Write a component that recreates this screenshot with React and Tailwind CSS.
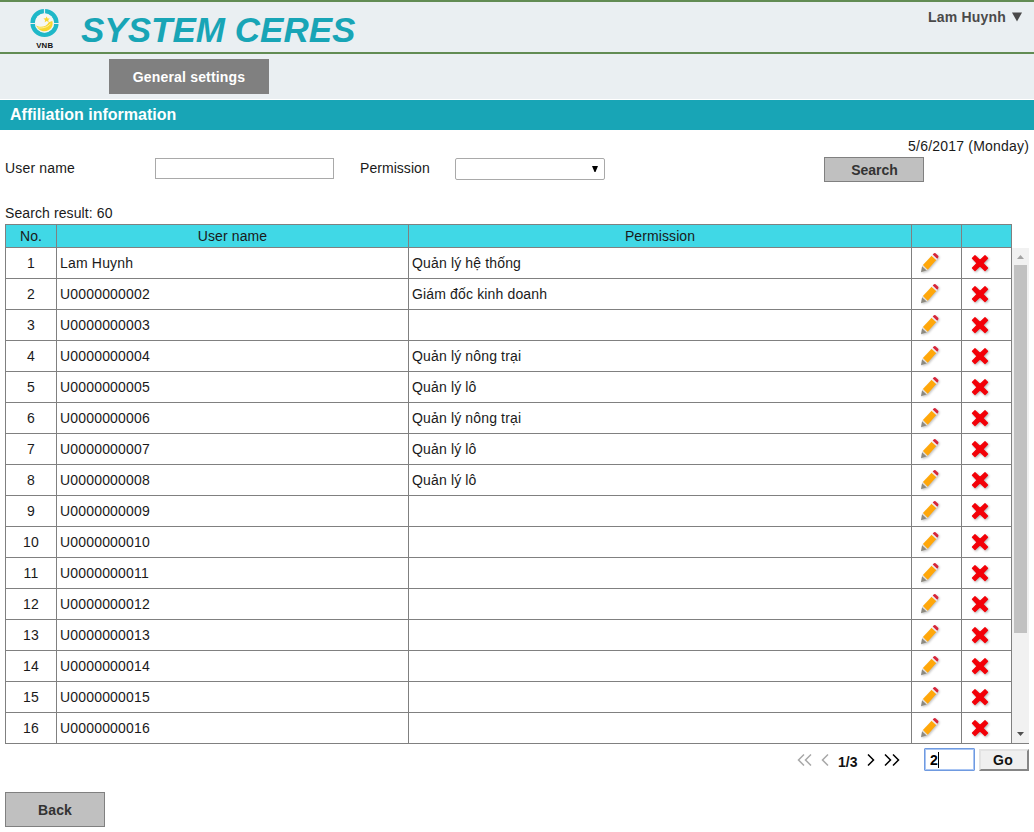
import React from "react";

const permissions = {
  1: "Quản lý hệ thống",
  2: "Giám đốc kinh doanh",
  4: "Quản lý nông trại",
  5: "Quản lý lô",
  6: "Quản lý nông trại",
  7: "Quản lý lô",
  8: "Quản lý lô",
};

const rows = Array.from({ length: 16 }, (_, i) => ({
  no: i + 1,
  name: i === 0 ? "Lam Huynh" : "U" + String(i + 1).padStart(10, "0"),
  permission: permissions[i + 1] || "",
}));

function Logo() {
  return (
    <svg width="32" height="44" viewBox="0 0 32 44" className="block">
      <circle cx="15.5" cy="16" r="11.9" fill="none" stroke="#1fb8c8" strokeWidth="4.4" />
      <circle cx="15.5" cy="16" r="9.4" fill="#f4f7f4" />
      <path d="M15.5 1v6.500M0 16.500h6.500M24.500 16.500h7" stroke="#eaeff2" strokeWidth="1.2" />
      <path d="M7.200 18.200c3 2.600 10.500 2 12.500-3l3.600-1.200c1.500 5-2 10.200-7.800 10.200-4 0-7.300-2.400-8.300-6z" fill="#f8d72f" />
      <path d="M8 20.700c5 1 11-.5 13.500-4" fill="none" stroke="#fff6b8" strokeWidth=".8" />
      <path d="M17.600 9.400l1 2 2.200.1-1.600 1.500.6 2.200-2.100-1.100-2 1.200.4-2.300-1.700-1.500 2.300-.2z" fill="#f8d72f" />
      <text x="15.700" y="40.900" textAnchor="middle" fontFamily="Liberation Sans, Arial, sans-serif" fontSize="7.800" fontWeight="700" fill="#111">VNB</text>
    </svg>
  );
}

function Pencil() {
  return (
    <svg width="20" height="22" viewBox="0 0 20 22" className="block drop-shadow-[1px_1px_1px_rgba(0,0,0,0.25)]">
      <path d="M1 20.300l1.100-6.300 5 4.300z" fill="#8d8a80" />
      <path d="M2.100 14.300l.8-1.400 5.100 4.700-1.300 1z" fill="#e4e1dc" />
      <path d="M2.900 13L11.600 3.800l4.700 4.200-8.600 9.800z" fill="#ffa70a" />
      <path d="M11.600 3.800l1.100-1.200 4.700 4.200-1.100 1.200z" fill="#f3eeee" />
      <path d="M12.700 2.600L14 1.200q.8-.5 1.500.1l2.700 2.500q.6.800 0 1.600l-1 1.400z" fill="#d7263a" />
    </svg>
  );
}

function Cross() {
  return (
    <svg width="18" height="18" viewBox="0 0 18 18" className="block drop-shadow-[1px_1px_1px_rgba(0,0,0,0.3)]">
      <path
        d="M4 1.800L9 6.500 14 1.800 16.500 4.300 11.800 9.200 16.500 14 14 16.500 9 11.800 4 16.500 1.500 14 6.200 9.200 1.500 4.300z"
        fill="#f30008"
        stroke="#f30008"
        strokeWidth="1.300"
        strokeLinejoin="round"
      />
    </svg>
  );
}

function Chevrons({ points, width, color }) {
  return (
    <svg width={width} height="12" viewBox={`0 0 ${width} 12`} className="block">
      {points.map((p) => (
        <polyline key={p} points={p} fill="none" stroke={color} strokeWidth="1.500" />
      ))}
    </svg>
  );
}

const grid = "grid grid-cols-[51px_352px_503px_50px_50px]";
const cell = "flex items-center border-r border-b border-[#808080]";

export default function App() {
  return (
    <div className="h-[832px] w-[1034px] overflow-hidden bg-white font-['Liberation_Sans',Arial,sans-serif] text-[14px] leading-4 tracking-[0.18px] text-[#1a1a1a]">
      <header className="flex h-[54px] items-start justify-between border-y-2 border-[#628c54] bg-[#eaeff2]">
        <div className="flex">
          <div className="ml-[29px] pt-[5px]">
            <Logo />
          </div>
          <h1 className="ml-5 pt-[8px] text-[35px] leading-10 font-bold tracking-[0.02px] whitespace-nowrap text-[#18a5b6] italic">SYSTEM CERES</h1>
        </div>
        <div className="flex items-center pt-[7px] pr-[12px] font-bold tracking-[0.2px] text-[#4a4a4a]">
          <span>Lam Huynh</span>
          <svg width="10" height="10" viewBox="0 0 10 10" className="ml-[6px]">
            <path d="M0 0.500h10L5 9.500z" fill="#4a4a4a" />
          </svg>
        </div>
      </header>
      <nav className="flex h-[45px] bg-[#eaeff2] pt-[5px] pl-[109px]">
        <button className="h-[35px] w-40 bg-[#808080] pt-px font-bold tracking-[0.18px] text-white">General settings</button>
      </nav>
      <div className="mt-px flex h-[30px] items-center bg-[#18a5b6] pb-px pl-[10px] text-[16px] font-bold tracking-[0px] text-white">Affiliation information</div>

      <div className="flex h-[27px] items-end justify-end pr-[5px] pb-[3px] tracking-[0.2px]">5/6/2017 (Monday)</div>
      <div className="flex h-[26px] items-start pl-[5px]">
        <label className="w-[150px] pt-[3px]">User name</label>
        <input className="mt-px h-[21px] w-[179px] border border-[#a9a9a9] bg-white" />
        <label className="ml-[26px] w-[95px] pt-[3px] tracking-[0.05px]">Permission</label>
        <div className="mt-px flex h-[22px] w-[150px] items-center justify-end rounded-[2px] border border-[#a9a9a9] pr-[6px]">
          <svg width="6" height="6" viewBox="0 0 6 6">
            <path d="M0 0h6L3.500 6h-1z" fill="#000" />
          </svg>
        </div>
        <button className="ml-[219px] h-[25px] w-[100px] border border-[#808080] bg-[#c0c0c0] pl-px font-bold tracking-[0px] text-[#333]">Search</button>
      </div>
      <div className="flex h-[41px] items-end pb-[3px] pl-[5px] tracking-[0.1px]">Search result: 60</div>

      <div className="pl-[5px]">
        <div className="w-[1007px] border-t border-l border-[#808080]">
          <div className={grid}>
            {["No.", "User name", "Permission", "", ""].map((h, i) => (
              <div key={i} className={`${cell} h-[23px] justify-center bg-[#40d8e6] tracking-[0.1px]`}>{h}</div>
            ))}
          </div>
        </div>
        <div className="flex h-[496px] w-[1024px]">
          <div className="w-[1007px] border-l border-[#808080]">
            {rows.map((r) => (
              <div key={r.no} className={grid}>
                <div className={`${cell} h-[31px] justify-center`}>{r.no}</div>
                <div className={`${cell} pl-[3px]`}>{r.name}</div>
                <div className={`${cell} pl-[3px] tracking-[0.15px]`}>{r.permission}</div>
                <div className={`${cell} pl-[8px]`}><Pencil /></div>
                <div className={`${cell} pl-[9px]`}><Cross /></div>
              </div>
            ))}
          </div>
          <div className="flex w-[17px] flex-col items-center border-b border-[#808080] bg-[#f1f1f1]">
            <div className="flex h-[17px] items-center">
              <svg width="7" height="4" viewBox="0 0 7 4"><path d="M0 4L3.500 0 7 4z" fill="#a3a3a3" /></svg>
            </div>
            <div className="h-[368px] w-[13px] bg-[#c1c1c1]" />
            <div className="mt-auto flex h-[17px] items-center pb-[2px]">
              <svg width="7" height="4" viewBox="0 0 7 4"><path d="M0 0L3.500 4 7 0z" fill="#505050" /></svg>
            </div>
          </div>
        </div>
      </div>

      <div className="flex h-[28px] items-start justify-end pt-[4px] pr-[5px]">
        <div className="flex pt-[6px]">
          <Chevrons width={16} color="#a8a8a8" points={["7,0.500 1.500,6 7,11.500", "14,0.500 8.500,6 14,11.500"]} />
          <div className="ml-[8px]"><Chevrons width={8} color="#a8a8a8" points={["7,0.500 1.500,6 7,11.500"]} /></div>
          <span className="ml-[9px] w-[20px] font-bold tracking-[0px] text-[#111]">1/3</span>
          <div className="ml-[9px]"><Chevrons width={8} color="#000" points={["1,0.500 6.500,6 1,11.500"]} /></div>
          <div className="ml-[9px]"><Chevrons width={17} color="#000" points={["1,0.500 6.500,6 1,11.500", "9,0.500 14.500,6 9,11.500"]} /></div>
        </div>
        <div className="ml-[23px] flex h-[23px] w-[51px] items-center rounded-[1px] border border-[#6f9ae0] bg-white pl-[5px] font-bold text-black ring-1 ring-[#a9c5f3] ring-inset">
          2<span className="h-[16px] w-px bg-black" />
        </div>
        <button className="mt-px ml-[4px] h-[22px] w-[50px] border-2 border-t-[#e3e3e3] border-r-[#858585] border-b-[#858585] border-l-[#e3e3e3] bg-[#efefef] pr-[2px] font-bold tracking-[0.2px] text-[#111]">Go</button>
      </div>
      <div className="pt-[20px] pl-[5px]">
        <button className="h-[35px] w-[100px] border border-[#808080] bg-[#c0c0c0] pt-px font-bold tracking-[0.1px] text-[#333]">Back</button>
      </div>
    </div>
  );
}
